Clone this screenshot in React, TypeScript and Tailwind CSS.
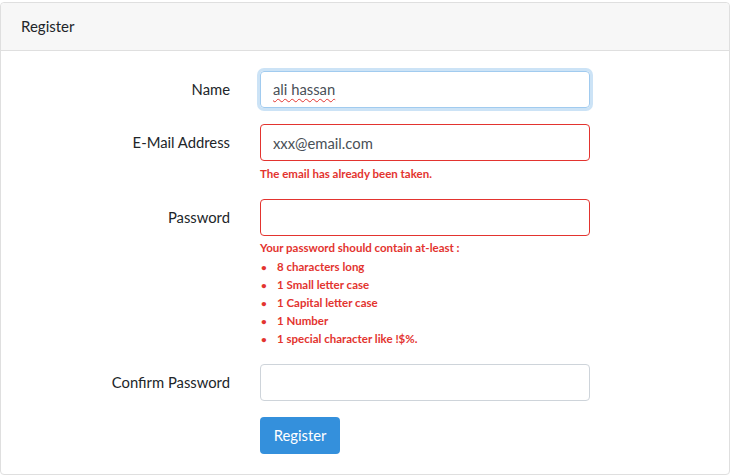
const passwordRules = [
  "8 characters long",
  "1 Small letter case",
  "1 Capital letter case",
  "1 Number",
  "1 special character like !$%.",
];

type FieldRowProps = {
  label: string;
  children: React.ReactNode;
};

function FieldRow({ label, children }: FieldRowProps) {
  return (
    <div className="mb-4 flex">
      <label className="w-[239px] shrink-0 pr-[15px] pt-[7px] text-right text-[14.8px] leading-[23px] text-[#212529]">
        {label}
      </label>
      <div className="w-[360px] px-[15px]">{children}</div>
    </div>
  );
}

export default function App() {
  return (
    <div className="min-h-screen bg-white font-['Lato','Noto_Sans',sans-serif] text-[14.4px]">
      <div className="mt-[2px] w-[730px] rounded border border-[#dfdfdf]">
        <div className="flex h-[48px] items-center rounded-t border-b border-[#dfdfdf] bg-[#f7f7f7] px-5 text-[15px] text-[#212529]">
          Register
        </div>
        <form className="flex flex-col px-5 pb-5 pt-5">
          <div className="-mx-[15px]">
            <FieldRow label="Name">
              <div className="flex h-[37px] items-center rounded border border-[#a1cbef] px-3 text-[14.8px] text-[#495057] shadow-[0_0_0_3px_rgba(52,144,220,0.25)]">
                <span className="underline decoration-[#e3342f] decoration-wavy decoration-1 underline-offset-[3px]">
                  ali hassan
                </span>
              </div>
            </FieldRow>
            <FieldRow label="E-Mail Address">
              <input
                type="email"
                defaultValue="xxx@email.com"
                className="block h-[37px] w-full rounded border border-[#e3342f] px-3 text-[14.8px] text-[#495057] outline-none"
              />
              <div className="mt-1 text-[11.5px] font-bold leading-[18px] text-[#e3342f]">
                The email has already been taken.
              </div>
            </FieldRow>
            <FieldRow label="Password">
              <input
                type="password"
                className="block h-[37px] w-full rounded border border-[#e3342f] px-3 text-[#495057] outline-none"
              />
              <div className="mt-[3px] text-[11.5px] font-bold leading-[18px] text-[#e3342f]">
                <div className="mb-px">Your password should contain at-least :</div>
                <ul>
                  {passwordRules.map((rule) => (
                    <li key={rule} className="flex h-[18px] items-center">
                      <span className="w-[17px] pl-[1px] text-[10px]">•</span>
                      <span>{rule}</span>
                    </li>
                  ))}
                </ul>
              </div>
            </FieldRow>
            <FieldRow label="Confirm Password">
              <input
                type="password"
                className="block h-[37px] w-full rounded border border-[#ced4da] px-3 text-[#495057] outline-none"
              />
            </FieldRow>
            <div className="flex">
              <div className="ml-[239px] px-[15px]">
                <button
                  type="button"
                  className="h-[37px] w-[80px] rounded bg-[#3490dc] text-[14.8px] text-white"
                >
                  Register
                </button>
              </div>
            </div>
          </div>
        </form>
      </div>
    </div>
  );
}
